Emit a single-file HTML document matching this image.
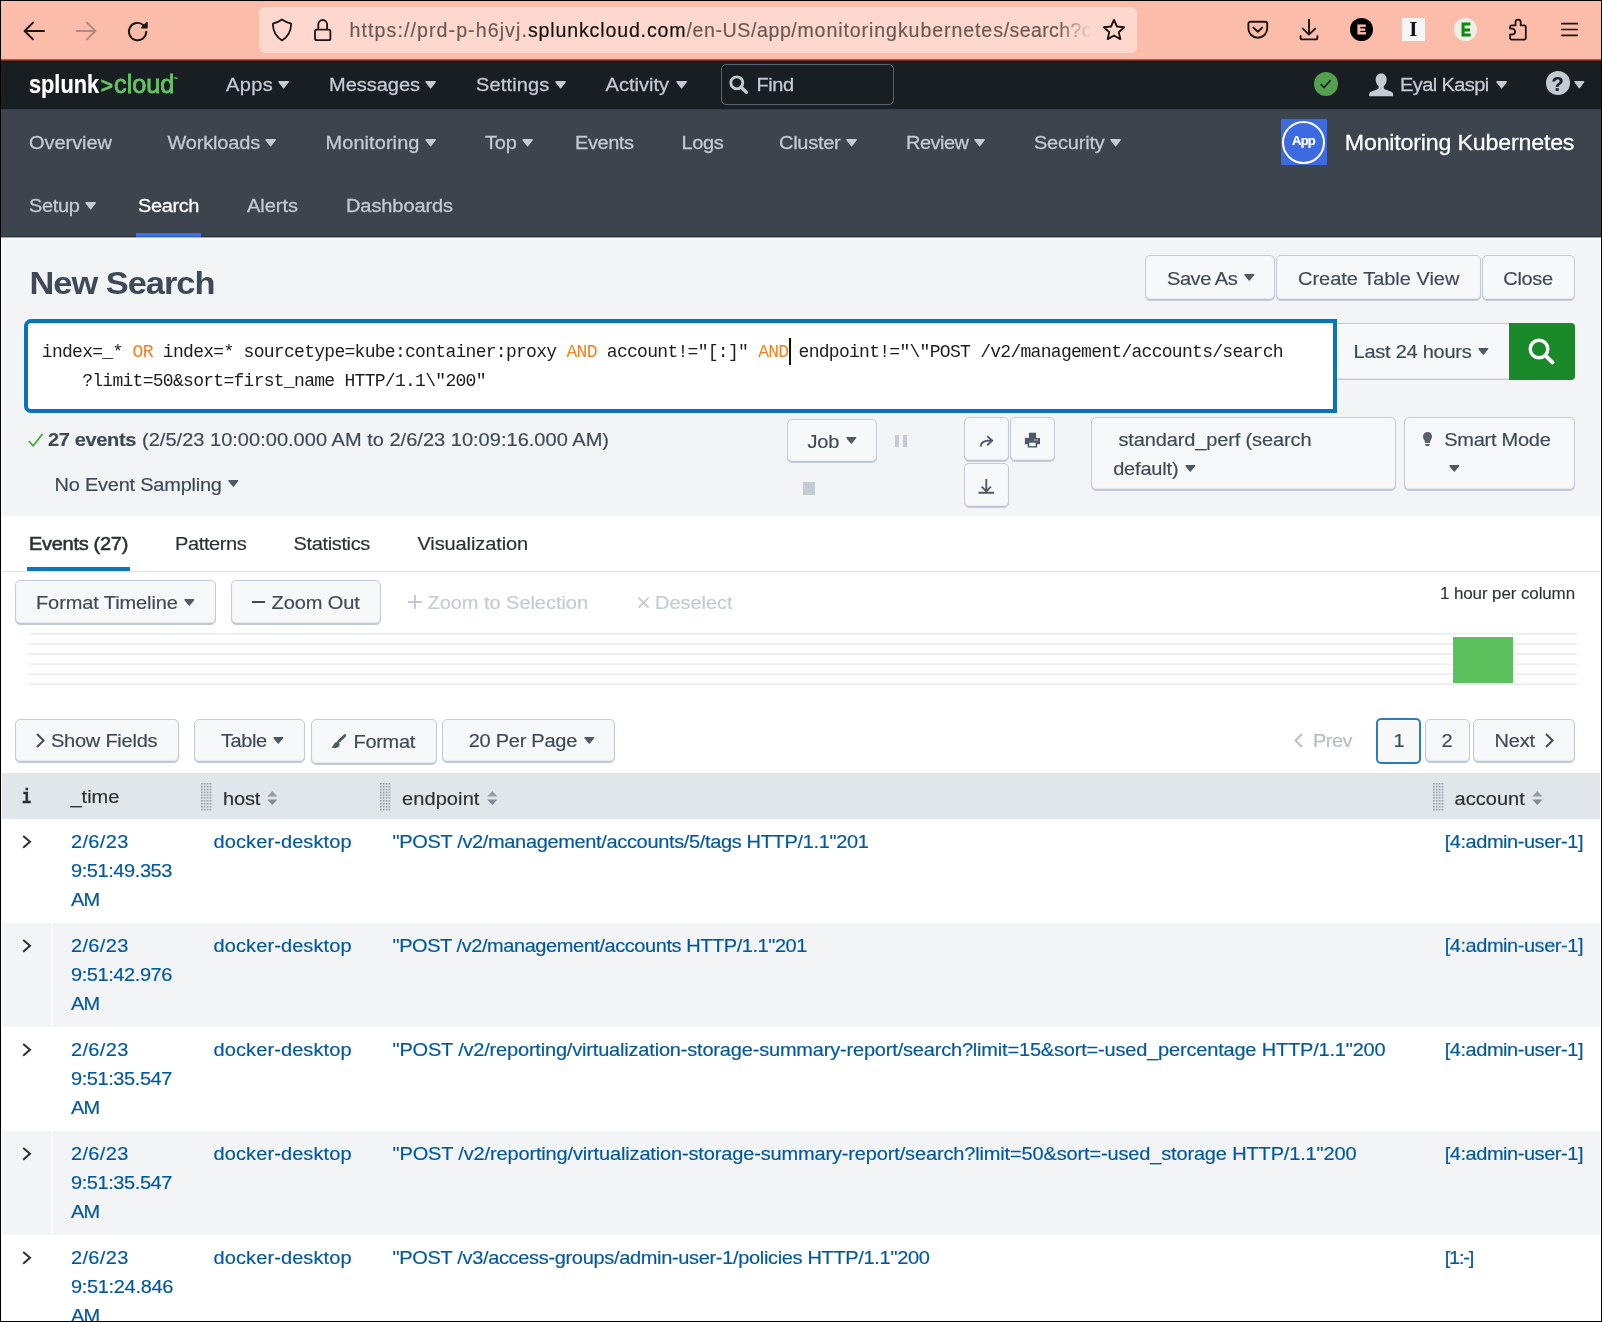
<!DOCTYPE html>
<html lang="en">
<head>
<meta charset="utf-8">
<title>Search | Splunk</title>
<style>
*{box-sizing:border-box;margin:0;padding:0}
html,body{width:1602px;height:1322px;overflow:hidden;background:#fff}
body{font-family:"Liberation Sans",sans-serif;font-size:20px;color:#3f4a59;position:relative}
.abs{position:absolute}
.t{position:absolute;white-space:pre;line-height:1;-webkit-text-stroke:0.2px currentColor}
.n{-webkit-text-stroke:0.28px currentColor}
svg{position:absolute;overflow:visible}
.btn{position:absolute;background:#f7f8fa;border:1px solid #c2cbd7;border-radius:5px;box-shadow:inset 0 -1px 0 #bcc5d1,inset 0 -2px 1px #e6e9ee}
#frame{position:absolute;left:0;top:0;width:1602px;height:1322px;border:1px solid #000;z-index:50}
</style>
</head>
<body>
<div id="page" style="position:absolute;left:0;top:0;width:1602px;height:1322px;will-change:transform">
<div id="chrome" class="abs" style="left:0;top:0;width:1602px;height:59px;background:#fcbcaa"></div>
<div class="abs" style="left:0.00px;top:59.00px;width:1602.00px;height:1.00px;background:#e8450a"></div>
<div class="abs" style="left:0.00px;top:60.00px;width:1602.00px;height:1.00px;background:#7a2e1e"></div>
<div class="abs" style="left:0.00px;top:61.00px;width:1602.00px;height:1.00px;background:#031b22"></div>
<div class="abs" style="left:258.60px;top:7.00px;width:878.40px;height:46.00px;background:#fed8ce;border-radius:6px"></div>
<svg style="left:20px;top:17px" width="28" height="28" viewBox="0 0 28 28" fill="none" stroke="#1c1413" stroke-width="2" stroke-linecap="round" stroke-linejoin="round"><path d="M24 14H5M13 5.6L4.6 14l8.4 8.4"/></svg>
<svg style="left:72px;top:17px" width="28" height="28" viewBox="0 0 28 28" fill="none" stroke="#b08a80" stroke-width="2" stroke-linecap="round" stroke-linejoin="round"><path d="M4.5 14H23.5M15 5.6l8.4 8.4-8.4 8.4"/></svg>
<svg style="left:124.200px;top:17.800px" width="28" height="28" viewBox="0 0 28 28" fill="none" stroke="#1c1413" stroke-width="1.900" stroke-linecap="round" stroke-linejoin="round"><path d="M22.3 13.6a8.7 8.7 0 1 1-2.8-6.4"/><path d="M23 4.4v5.4h-5.4z" fill="#1c1413" stroke-width="1.4"/></svg>
<svg style="left:270px;top:17px" width="24" height="26" viewBox="0 0 24 26" fill="none" stroke="#1c1413" stroke-width="1.800" stroke-linejoin="round"><path d="M12 2.500c2.200 1.700 5.200 3 8.600 3.900 0.300 0.100 0.500 0.400 0.500 0.700C21.100 14.200 18.300 19.600 12 23.400 5.700 19.600 2.900 14.200 2.900 7.100c0-0.300 0.200-0.600 0.500-0.700C6.800 5.500 9.800 4.200 12 2.500z"/></svg>
<svg style="left:312px;top:17px" width="22" height="26" viewBox="0 0 22 26" fill="none" stroke="#1c1413" stroke-width="1.800" stroke-linejoin="round"><rect x="3" y="12.600" width="15.400" height="10.600" rx="1.800"/><path d="M6.300 12.600V7.400a4.400 4.400 0 0 1 8.800 0v5.200"/></svg>
<div class="t" style="left:349.50px;top:21.00px;font-size:19.6px;color:#6e5a55;-webkit-text-stroke:0.2px currentColor;"><span style="letter-spacing:1.082px;">https://prd-p-h6jvj.</span><span style="letter-spacing:0.834px;color:#15110f;">splunkcloud.com</span><span style="letter-spacing:0.582px;">/en-US/app/</span><span style="letter-spacing:0.901px;">monitoringkubernetes</span><span style="letter-spacing:0.336px;">/search?c</span></div>
<div class="abs" style="left:1058.00px;top:12.00px;width:38.00px;height:36.00px;background:linear-gradient(90deg,rgba(254,216,206,0),#fed8ce 88%)"></div>
<svg style="left:1101px;top:17px" width="26" height="26" viewBox="0 0 26 26" fill="none" stroke="#1c1413" stroke-width="1.9" stroke-linejoin="round"><path d="M13 2.900l3 6.600 7.100 0.800-5.300 4.800 1.500 7-6.300-3.600-6.300 3.600 1.500-7L2.900 10.300l7.100-0.800z"/></svg>
<svg style="left:1245px;top:18px" width="26" height="24" viewBox="0 0 26 24" fill="none" stroke="#1c1413" stroke-width="1.9" stroke-linecap="round" stroke-linejoin="round"><path d="M5.400 3.800h14.800a2 2 0 0 1 2 2v4.600a9.400 9.400 0 0 1-18.800 0V5.800a2 2 0 0 1 2-2z"/><path d="M8.400 9.600l4.400 4.200 4.400-4.200"/></svg>
<svg style="left:1297px;top:17px" width="24" height="26" viewBox="0 0 24 26" fill="none" stroke="#1c1413" stroke-width="1.9" stroke-linecap="round" stroke-linejoin="round"><path d="M12 2.600v14.600M5.800 11.600l6.200 6 6.200-6M3.600 19v1.800a1.600 1.600 0 0 0 1.600 1.600h13.600a1.600 1.600 0 0 0 1.600-1.600V19"/></svg>
<div class="abs" style="left:1350.00px;top:18.00px;width:23.00px;height:23.00px;background:#000;border-radius:50%"></div>
<div class="t" style="left:1356.90px;top:23.00px;font-size:13.6px;color:#fcbcaa;font-weight:700;-webkit-text-stroke:0.8px #fcbcaa;">E</div>
<div class="abs" style="left:1402.00px;top:18.00px;width:23.00px;height:23.00px;background:#f6f6f6"></div>
<div class="t" style="left:1409.60px;top:19.00px;font-size:20px;color:#111;font-weight:700;font-family:'Liberation Serif',serif;">I</div>
<div class="abs" style="left:1454.00px;top:18.00px;width:23.00px;height:23.00px;background:#efefe8;border-radius:50%"></div>
<div class="t" style="left:1460.80px;top:22.00px;font-size:17.5px;color:#0a8a0a;font-weight:700;-webkit-text-stroke:1px #0a8a0a;transform:scaleX(0.84);transform-origin:0 0;">E</div>
<svg style="left:0;top:0" width="1" height="1" fill="none" stroke="#1c1413" stroke-width="1.800" stroke-linejoin="round"><path d="M1511.700 25.400H1515.500V22.200a2.600 2.600 0 0 1 5.200 0V25.400H1524.200a1.600 1.600 0 0 1 1.600 1.600V38.100a1.600 1.600 0 0 1-1.600 1.600H1511.700a1.600 1.600 0 0 1-1.600-1.600V34.500H1512.200a2.900 2.900 0 0 0 0-5.800H1510.100V27a1.600 1.600 0 0 1 1.600-1.600Z"/></svg>
<svg style="left:0;top:0" width="1" height="1" fill="none" stroke="#1c1413" stroke-width="1.700" stroke-linecap="round"><path d="M1561.800 23.700H1577.300M1561.800 29.500H1577.300M1561.800 35.300H1577.300"/></svg>
<div class="abs" style="left:0.00px;top:62.00px;width:1602.00px;height:47.00px;background:#191e22"></div>
<div class="t" style="left:28.60px;top:72.00px;font-size:25.5px;color:#fff;font-weight:700;transform:scaleX(0.8518);transform-origin:0 0;">splunk</div>
<div class="t" style="left:100.60px;top:76.00px;font-size:21.5px;letter-spacing:-0.956px;color:#65c466;font-weight:700;">&gt;</div>
<div class="t" style="left:113.60px;top:72.00px;font-size:25.5px;color:#65c466;-webkit-text-stroke:0.8px #65c466;transform:scaleX(0.9908);transform-origin:0 0;">cloud</div>
<div class="t" style="left:173.60px;top:77.00px;font-size:4px;color:#65c466;">™</div>
<div class="t n" style="left:226.00px;top:74.00px;font-size:20px;transform:scaleY(0.935);transform-origin:0 17px;letter-spacing:0.353px;color:#c3cbd4;">Apps</div>
<svg style="left:278.00px;top:80.60px" width="11.2" height="7.6" viewBox="0 0 11.2 7.6"><path d="M1 0.8 L10.2 0.8 L5.6 6.8 Z" fill="#c3cbd4" stroke="#c3cbd4" stroke-width="1.4" stroke-linejoin="round"/></svg>
<div class="t n" style="left:329.00px;top:74.00px;font-size:20px;transform:scaleY(0.935);transform-origin:0 17px;letter-spacing:-0.019px;color:#c3cbd4;">Messages</div>
<svg style="left:425.00px;top:80.60px" width="11.2" height="7.6" viewBox="0 0 11.2 7.6"><path d="M1 0.8 L10.2 0.8 L5.6 6.8 Z" fill="#c3cbd4" stroke="#c3cbd4" stroke-width="1.4" stroke-linejoin="round"/></svg>
<div class="t n" style="left:476.00px;top:74.00px;font-size:20px;transform:scaleY(0.935);transform-origin:0 17px;letter-spacing:0.154px;color:#c3cbd4;">Settings</div>
<svg style="left:554.50px;top:80.60px" width="11.2" height="7.6" viewBox="0 0 11.2 7.6"><path d="M1 0.8 L10.2 0.8 L5.6 6.8 Z" fill="#c3cbd4" stroke="#c3cbd4" stroke-width="1.4" stroke-linejoin="round"/></svg>
<div class="t n" style="left:605.60px;top:74.00px;font-size:20px;transform:scaleY(0.935);transform-origin:0 17px;letter-spacing:0.007px;color:#c3cbd4;">Activity</div>
<svg style="left:676.40px;top:80.60px" width="11.2" height="7.6" viewBox="0 0 11.2 7.6"><path d="M1 0.8 L10.2 0.8 L5.6 6.8 Z" fill="#c3cbd4" stroke="#c3cbd4" stroke-width="1.4" stroke-linejoin="round"/></svg>
<div class="abs" style="left:721.00px;top:64.40px;width:173.40px;height:40.60px;border:1px solid #5a6470;border-radius:5px"></div>
<svg style="left:728px;top:73.500px" width="22" height="22" viewBox="0 0 22 22" fill="none" stroke="#c3cbd4" stroke-width="2.8" stroke-linecap="round"><circle cx="8.800" cy="8.800" r="6"/><path d="M13.400 13.400l5 5" stroke-width="3.400"/></svg>
<div class="t n" style="left:756.40px;top:74.00px;font-size:20px;transform:scaleY(0.935);transform-origin:0 17px;letter-spacing:-0.427px;color:#c3cbd4;">Find</div>
<div class="abs" style="left:1313.90px;top:71.70px;width:24.40px;height:24.40px;background:#53a051;border-radius:50%"></div>
<svg style="left:1313.400px;top:71.200px" width="25.200" height="25.200" viewBox="0 0 25.200 25.200" fill="none" stroke="#171d21" stroke-width="1.700"><path d="M7.600 13.200l3.400 3.300 6.600-7.300"/></svg>
<svg style="left:1368.600px;top:72.800px" width="24.400" height="23.600" viewBox="0 0 24.400 23.600" fill="#c3cbd4"><path d="M12.200 0.400c3.300 0 5.500 2.500 5.500 6 0 2.600-1.200 5.300-2.900 6.700v1.600c0 0.700 0.400 1.200 1.100 1.500l5.900 2.300c1.500 0.600 2.400 1.800 2.400 3.400v1.300H0.200v-1.300c0-1.600 0.900-2.800 2.400-3.400l5.900-2.300c0.700-0.300 1.100-0.800 1.100-1.500v-1.600c-1.700-1.400-2.900-4.100-2.900-6.700 0-3.500 2.200-6 5.500-6z"/></svg>
<div class="t n" style="left:1400.00px;top:74.00px;font-size:20px;transform:scaleY(0.935);transform-origin:0 17px;letter-spacing:-0.589px;color:#c3cbd4;">Eyal Kaspi</div>
<svg style="left:1496.40px;top:80.70px" width="11.2" height="7.6" viewBox="0 0 11.2 7.6"><path d="M1 0.8 L10.2 0.8 L5.6 6.8 Z" fill="#c3cbd4" stroke="#c3cbd4" stroke-width="1.4" stroke-linejoin="round"/></svg>
<div class="abs" style="left:1546.00px;top:71.40px;width:24.00px;height:24.00px;background:#c3cbd4;border-radius:50%"></div>
<div class="t" style="left:1551.60px;top:74.00px;font-size:20px;color:#191e22;font-weight:700;">?</div>
<svg style="left:1574.00px;top:80.80px" width="10.6" height="7.4" viewBox="0 0 10.6 7.4"><path d="M1 0.8 L9.6 0.8 L5.3 6.6000000000000005 Z" fill="#c3cbd4" stroke="#c3cbd4" stroke-width="1.4" stroke-linejoin="round"/></svg>
<div class="abs" style="left:0.00px;top:109.00px;width:1602.00px;height:127.00px;background:#3c444d"></div>
<div class="abs" style="left:0.00px;top:109.00px;width:1602.00px;height:1.00px;background:#333a44"></div>
<div class="abs" style="left:0.00px;top:236.00px;width:1602.00px;height:1.00px;background:#2a323d"></div>
<div class="abs" style="left:0.00px;top:237.00px;width:1602.00px;height:1.00px;background:#a3a6a9"></div>
<div class="t n" style="left:29.00px;top:132.00px;font-size:20px;transform:scaleY(0.935);transform-origin:0 17px;letter-spacing:-0.044px;color:#c3cbd4;">Overview</div>
<div class="t n" style="left:167.50px;top:132.00px;font-size:20px;transform:scaleY(0.935);transform-origin:0 17px;letter-spacing:-0.179px;color:#c3cbd4;">Workloads</div>
<svg style="left:265.00px;top:138.60px" width="11.2" height="7.6" viewBox="0 0 11.2 7.6"><path d="M1 0.8 L10.2 0.8 L5.6 6.8 Z" fill="#c3cbd4" stroke="#c3cbd4" stroke-width="1.4" stroke-linejoin="round"/></svg>
<div class="t n" style="left:325.50px;top:132.00px;font-size:20px;transform:scaleY(0.935);transform-origin:0 17px;letter-spacing:0.062px;color:#c3cbd4;">Monitoring</div>
<svg style="left:424.50px;top:138.60px" width="11.2" height="7.6" viewBox="0 0 11.2 7.6"><path d="M1 0.8 L10.2 0.8 L5.6 6.8 Z" fill="#c3cbd4" stroke="#c3cbd4" stroke-width="1.4" stroke-linejoin="round"/></svg>
<div class="t n" style="left:485.00px;top:132.00px;font-size:20px;transform:scaleY(0.935);transform-origin:0 17px;letter-spacing:-0.249px;color:#c3cbd4;">Top</div>
<svg style="left:521.50px;top:138.60px" width="11.2" height="7.6" viewBox="0 0 11.2 7.6"><path d="M1 0.8 L10.2 0.8 L5.6 6.8 Z" fill="#c3cbd4" stroke="#c3cbd4" stroke-width="1.4" stroke-linejoin="round"/></svg>
<div class="t n" style="left:575.00px;top:132.00px;font-size:20px;transform:scaleY(0.935);transform-origin:0 17px;letter-spacing:-0.440px;color:#c3cbd4;">Events</div>
<div class="t n" style="left:681.50px;top:132.00px;font-size:20px;transform:scaleY(0.935);transform-origin:0 17px;letter-spacing:-0.342px;color:#c3cbd4;">Logs</div>
<div class="t n" style="left:779.00px;top:132.00px;font-size:20px;transform:scaleY(0.935);transform-origin:0 17px;letter-spacing:-0.264px;color:#c3cbd4;">Cluster</div>
<svg style="left:845.50px;top:138.60px" width="11.2" height="7.6" viewBox="0 0 11.2 7.6"><path d="M1 0.8 L10.2 0.8 L5.6 6.8 Z" fill="#c3cbd4" stroke="#c3cbd4" stroke-width="1.4" stroke-linejoin="round"/></svg>
<div class="t n" style="left:906.00px;top:132.00px;font-size:20px;transform:scaleY(0.935);transform-origin:0 17px;letter-spacing:-0.513px;color:#c3cbd4;">Review</div>
<svg style="left:973.50px;top:138.60px" width="11.2" height="7.6" viewBox="0 0 11.2 7.6"><path d="M1 0.8 L10.2 0.8 L5.6 6.8 Z" fill="#c3cbd4" stroke="#c3cbd4" stroke-width="1.4" stroke-linejoin="round"/></svg>
<div class="t n" style="left:1034.00px;top:132.00px;font-size:20px;transform:scaleY(0.935);transform-origin:0 17px;letter-spacing:-0.218px;color:#c3cbd4;">Security</div>
<svg style="left:1109.50px;top:138.60px" width="11.2" height="7.6" viewBox="0 0 11.2 7.6"><path d="M1 0.8 L10.2 0.8 L5.6 6.8 Z" fill="#c3cbd4" stroke="#c3cbd4" stroke-width="1.4" stroke-linejoin="round"/></svg>
<div class="t n" style="left:29.00px;top:195.00px;font-size:20px;transform:scaleY(0.935);transform-origin:0 17px;letter-spacing:-0.353px;color:#c3cbd4;">Setup</div>
<svg style="left:84.50px;top:201.60px" width="11.2" height="7.6" viewBox="0 0 11.2 7.6"><path d="M1 0.8 L10.2 0.8 L5.6 6.8 Z" fill="#c3cbd4" stroke="#c3cbd4" stroke-width="1.4" stroke-linejoin="round"/></svg>
<div class="t n" style="left:138.00px;top:195.00px;font-size:20px;transform:scaleY(0.935);transform-origin:0 17px;letter-spacing:-0.395px;color:#fff;">Search</div>
<div class="t n" style="left:247.00px;top:195.00px;font-size:20px;transform:scaleY(0.935);transform-origin:0 17px;letter-spacing:-0.021px;color:#c3cbd4;">Alerts</div>
<div class="t n" style="left:346.00px;top:195.00px;font-size:20px;transform:scaleY(0.935);transform-origin:0 17px;letter-spacing:-0.084px;color:#c3cbd4;">Dashboards</div>
<div class="abs" style="left:136.00px;top:233.00px;width:65.00px;height:3.00px;background:#3f70de"></div>
<div class="abs" style="left:136.00px;top:236.00px;width:65.00px;height:1.00px;background:#2b62dc"></div>
<div class="abs" style="left:136.00px;top:237.00px;width:65.00px;height:1.00px;background:#a4b6ee"></div>
<div class="abs" style="left:1280.70px;top:119.00px;width:46.30px;height:46.30px;background:#3c6be0"></div>
<div class="abs" style="left:1282.30px;top:120.60px;width:43.10px;height:43.10px;border:2.2px solid #fff;border-radius:50%"></div>
<div class="t" style="left:1292.00px;top:134.00px;font-size:13px;transform:scaleY(0.935);transform-origin:0 11px;letter-spacing:-0.757px;color:#fff;font-weight:700;">App</div>
<div class="t n" style="left:1344.80px;top:131.00px;font-size:23.2px;transform:scaleY(0.935);transform-origin:0 19px;letter-spacing:-0.182px;color:#fff;">Monitoring Kubernetes</div>
<div class="abs" style="left:2.00px;top:239.00px;width:1598.00px;height:277.00px;background:#f2f4f5"></div>
<div class="t" style="left:29.50px;top:265.00px;font-size:34.4px;transform:scaleY(0.935);transform-origin:0 29px;letter-spacing:-1.003px;color:#3f4a59;font-weight:700;-webkit-text-stroke:0;">New Search</div>
<div class="btn" style="left:1145.30px;top:255.00px;width:130.10px;height:45.60px;"></div>
<div class="t" style="left:1167.00px;top:268.00px;font-size:20px;transform:scaleY(0.935);transform-origin:0 17px;letter-spacing:-0.440px;">Save As</div>
<svg style="left:1244.00px;top:274.30px" width="10.6" height="6.8" viewBox="0 0 10.6 6.8"><path d="M1 0.8 L9.6 0.8 L5.3 6.0 Z" fill="#505a66" stroke="#505a66" stroke-width="1.4" stroke-linejoin="round"/></svg>
<div class="btn" style="left:1276.00px;top:255.00px;width:204.60px;height:45.60px;"></div>
<div class="t" style="left:1298.00px;top:268.00px;font-size:20px;transform:scaleY(0.935);transform-origin:0 17px;letter-spacing:-0.011px;">Create Table View</div>
<div class="btn" style="left:1481.60px;top:255.00px;width:93.40px;height:45.60px;"></div>
<div class="t" style="left:1503.30px;top:268.00px;font-size:20px;transform:scaleY(0.935);transform-origin:0 17px;letter-spacing:-0.347px;">Close</div>
<div class="abs" style="left:1330.00px;top:323.00px;width:179.00px;height:56.60px;background:#f7f8fa;border-top:1px solid #c3cbd4;border-bottom:1px solid #c3cbd4;box-shadow:inset 0 -1px 0 #dfe4e8"></div>
<div class="t" style="left:1353.50px;top:341.00px;font-size:20px;transform:scaleY(0.935);transform-origin:0 17px;letter-spacing:-0.246px;">Last 24 hours</div>
<svg style="left:1478.00px;top:347.80px" width="10.6" height="6.8" viewBox="0 0 10.6 6.8"><path d="M1 0.8 L9.6 0.8 L5.3 6.0 Z" fill="#505a66" stroke="#505a66" stroke-width="1.4" stroke-linejoin="round"/></svg>
<div class="abs" style="left:1508.70px;top:322.70px;width:66.30px;height:57.30px;background:#1a8929;border-radius:0 4px 4px 0"></div>
<svg style="left:1524px;top:334px" width="34" height="34" viewBox="0 0 34 34" fill="none" stroke="#fff" stroke-width="3.400" stroke-linecap="round"><circle cx="15" cy="15" r="8.800"/><path d="M21.800 21.800l6.600 6.600" stroke-width="4"/></svg>
<div class="abs" style="left:24.40px;top:318.80px;width:1312.40px;height:94.40px;background:#fff;border:4px solid #0b72b4;border-radius:7px 0 0 7px;box-shadow:inset 0 1px 2px rgba(0,0,0,.15)"></div>
<div class="t" style="left:41.80px;top:343.00px;font-size:18px;letter-spacing:-0.712px;color:#1a1c20;font-family:'Liberation Mono',monospace;-webkit-text-stroke:0;">index=_* </div>
<div class="t" style="left:132.61px;top:343.00px;font-size:18px;letter-spacing:-0.712px;color:#f0811e;font-family:'Liberation Mono',monospace;-webkit-text-stroke:0;">OR</div>
<div class="t" style="left:152.79px;top:343.00px;font-size:18px;letter-spacing:-0.712px;color:#1a1c20;font-family:'Liberation Mono',monospace;-webkit-text-stroke:0;"> index=* sourcetype=kube:container:proxy </div>
<div class="t" style="left:566.48px;top:343.00px;font-size:18px;letter-spacing:-0.712px;color:#f0811e;font-family:'Liberation Mono',monospace;-webkit-text-stroke:0;">AND</div>
<div class="t" style="left:596.75px;top:343.00px;font-size:18px;letter-spacing:-0.712px;color:#1a1c20;font-family:'Liberation Mono',monospace;-webkit-text-stroke:0;"> account!="[:]" </div>
<div class="t" style="left:758.19px;top:343.00px;font-size:18px;letter-spacing:-0.712px;color:#f0811e;font-family:'Liberation Mono',monospace;-webkit-text-stroke:0;">AND</div>
<div class="t" style="left:788.46px;top:343.00px;font-size:18px;letter-spacing:-0.712px;color:#1a1c20;font-family:'Liberation Mono',monospace;-webkit-text-stroke:0;"> endpoint!="\"POST /v2/management/accounts/search</div>
<div class="t" style="left:82.16px;top:372.00px;font-size:18px;letter-spacing:-0.712px;color:#1a1c20;font-family:'Liberation Mono',monospace;-webkit-text-stroke:0;">?limit=50&amp;sort=first_name HTTP/1.1\"200"</div>
<div class="abs" style="left:789.00px;top:337.50px;width:2.40px;height:27.00px;background:#111"></div>
<svg style="left:28px;top:433px" width="16" height="14" viewBox="0 0 16 14" fill="none" stroke="#4fa84a" stroke-width="1.800"><path d="M0.800 8.200l4.400 4.600L14.600 0.900"/></svg>
<div class="t" style="left:48.00px;top:429.00px;font-size:20px;transform:scaleY(0.935);transform-origin:0 17px;letter-spacing:-0.352px;font-weight:700;">27 events</div>
<div class="t" style="left:142.00px;top:429.00px;font-size:20px;transform:scaleY(0.935);transform-origin:0 17px;letter-spacing:0.022px;">(2/5/23 10:00:00.000 AM to 2/6/23 10:09:16.000 AM)</div>
<div class="t" style="left:54.50px;top:474.00px;font-size:20px;transform:scaleY(0.935);transform-origin:0 17px;letter-spacing:-0.235px;">No Event Sampling</div>
<svg style="left:228.20px;top:480.20px" width="10.6" height="6.8" viewBox="0 0 10.6 6.8"><path d="M1 0.8 L9.6 0.8 L5.3 6.0 Z" fill="#505a66" stroke="#505a66" stroke-width="1.4" stroke-linejoin="round"/></svg>
<div class="btn" style="left:786.50px;top:418.70px;width:90.50px;height:44.70px;"></div>
<div class="t" style="left:807.50px;top:431.00px;font-size:20px;transform:scaleY(0.935);transform-origin:0 17px;letter-spacing:-0.249px;">Job</div>
<svg style="left:846.00px;top:437.30px" width="10.6" height="6.8" viewBox="0 0 10.6 6.8"><path d="M1 0.8 L9.6 0.8 L5.3 6.0 Z" fill="#505a66" stroke="#505a66" stroke-width="1.4" stroke-linejoin="round"/></svg>
<div class="abs" style="left:895.00px;top:434.50px;width:4.00px;height:12.00px;background:#c3cbd4"></div>
<div class="abs" style="left:902.50px;top:434.50px;width:4.00px;height:12.00px;background:#c3cbd4"></div>
<div class="abs" style="left:802.50px;top:482.00px;width:12.70px;height:12.50px;background:#c3cbd4"></div>
<div class="btn" style="left:964.00px;top:417.00px;width:45.00px;height:45.00px;"></div>
<div class="btn" style="left:1010.00px;top:417.00px;width:45.40px;height:45.00px;"></div>
<div class="btn" style="left:964.00px;top:463.00px;width:45.00px;height:45.00px;"></div>
<svg style="left:0;top:0" width="1" height="1" fill="none" stroke="#4f5a67" stroke-width="1.900" stroke-linejoin="miter"><path d="M980.500 446.600c0.300-4 3.600-6.300 10.600-6.100M987.200 436.100l5 4.500-5 4.700"/></svg>
<svg style="left:0;top:0" width="1" height="1" fill="#4f5a67"><path d="M1028.900 432.800h7.200v5.600h-7.200zM1024.900 437.900h15.100v6.300h-15.100zM1027.700 441.600h9.500v5.900h-9.500z"/><rect x="1029.300" y="442.700" width="6.300" height="3.400" fill="#f7f8fa"/><rect x="1034.200" y="439.300" width="1.400" height="1.300" fill="#c7cdd5"/><rect x="1036.500" y="439.300" width="1.400" height="1.300" fill="#c7cdd5"/></svg>
<svg style="left:0;top:0" width="1" height="1" fill="none" stroke="#4f5a67" stroke-width="1.900"><path d="M986.300 478.900v12.400M981.700 486.600l4.600 4.700 4.600-4.700M978.500 492.800h15.600"/></svg>
<div class="btn" style="left:1091.40px;top:417.40px;width:304.20px;height:73.20px;"></div>
<div class="t" style="left:1118.40px;top:429.00px;font-size:20px;transform:scaleY(0.935);transform-origin:0 17px;letter-spacing:-0.127px;">standard_perf (search</div>
<div class="t" style="left:1113.20px;top:458.00px;font-size:20px;transform:scaleY(0.935);transform-origin:0 17px;letter-spacing:-0.189px;">default)</div>
<svg style="left:1185.00px;top:464.80px" width="10.6" height="6.8" viewBox="0 0 10.6 6.8"><path d="M1 0.8 L9.6 0.8 L5.3 6.0 Z" fill="#505a66" stroke="#505a66" stroke-width="1.4" stroke-linejoin="round"/></svg>
<div class="btn" style="left:1404.00px;top:417.40px;width:171.00px;height:73.20px;"></div>
<svg style="left:1422.700px;top:432px" width="9" height="14" viewBox="0 0 9 14" fill="#56606c"><path d="M4.500 0a4.500 4.500 0 0 1 4.500 4.500c0 1.700-0.900 2.800-1.500 4.100-0.300 0.700-0.500 1.500-0.600 2.400H2.100c-0.100-0.900-0.300-1.700-0.600-2.400C0.900 7.300 0 6.200 0 4.500A4.500 4.500 0 0 1 4.500 0zM2.300 12h4.400v1.100c0 0.500-0.400 0.900-0.900 0.900H3.200c-0.500 0-0.900-0.400-0.900-0.900z"/></svg>
<div class="t" style="left:1444.30px;top:429.00px;font-size:20px;transform:scaleY(0.935);transform-origin:0 17px;letter-spacing:-0.273px;">Smart Mode</div>
<svg style="left:1449.20px;top:464.60px" width="10.6" height="6.8" viewBox="0 0 10.6 6.8"><path d="M1 0.8 L9.6 0.8 L5.3 6.0 Z" fill="#505a66" stroke="#505a66" stroke-width="1.4" stroke-linejoin="round"/></svg>
<div class="t" style="left:29.00px;top:533.00px;font-size:20px;transform:scaleY(0.935);transform-origin:0 17px;letter-spacing:-0.297px;color:#2c3036;-webkit-text-stroke:0.6px #2c3036;">Events (27)</div>
<div class="t" style="left:175.00px;top:533.00px;font-size:20px;transform:scaleY(0.935);transform-origin:0 17px;letter-spacing:-0.373px;color:#2c3036;">Patterns</div>
<div class="t" style="left:293.50px;top:533.00px;font-size:20px;transform:scaleY(0.935);transform-origin:0 17px;letter-spacing:-0.352px;color:#2c3036;">Statistics</div>
<div class="t" style="left:417.50px;top:533.00px;font-size:20px;transform:scaleY(0.935);transform-origin:0 17px;letter-spacing:-0.110px;color:#2c3036;">Visualization</div>
<div class="abs" style="left:2.00px;top:571.30px;width:1598.00px;height:1.20px;background:#dfe4e8"></div>
<div class="abs" style="left:27.00px;top:567.00px;width:102.50px;height:4.20px;background:#0b76bd"></div>
<div class="btn" style="left:14.50px;top:580.00px;width:201.30px;height:44.80px;"></div>
<div class="t" style="left:36.00px;top:592.00px;font-size:20px;transform:scaleY(0.935);transform-origin:0 17px;letter-spacing:-0.105px;">Format Timeline</div>
<svg style="left:184.30px;top:598.50px" width="10.6" height="6.8" viewBox="0 0 10.6 6.8"><path d="M1 0.8 L9.6 0.8 L5.3 6.0 Z" fill="#505a66" stroke="#505a66" stroke-width="1.4" stroke-linejoin="round"/></svg>
<div class="btn" style="left:230.70px;top:580.00px;width:150.10px;height:44.80px;"></div>
<div class="abs" style="left:251.80px;top:601.20px;width:13.60px;height:1.80px;background:#3f4a59"></div>
<div class="t" style="left:271.60px;top:592.00px;font-size:20px;transform:scaleY(0.935);transform-origin:0 17px;letter-spacing:-0.115px;">Zoom Out</div>
<div class="abs" style="left:408.00px;top:601.20px;width:14.00px;height:1.70px;background:#c3cbd4"></div>
<div class="abs" style="left:414.10px;top:595.00px;width:1.70px;height:14.00px;background:#c3cbd4"></div>
<div class="t" style="left:427.50px;top:592.00px;font-size:20px;transform:scaleY(0.935);transform-origin:0 17px;letter-spacing:-0.041px;color:#c3cbd4;">Zoom to Selection</div>
<svg style="left:637.500px;top:596.600px" width="11.200" height="11.200" viewBox="0 0 11.200 11.200" stroke="#c3cbd4" stroke-width="1.800"><path d="M0.600 0.600l10 10M10.600 0.600l-10 10"/></svg>
<div class="t" style="left:655.00px;top:592.00px;font-size:20px;transform:scaleY(0.935);transform-origin:0 17px;letter-spacing:-0.039px;color:#c3cbd4;">Deselect</div>
<div class="t" style="left:1440.00px;top:585.00px;font-size:17px;transform:scaleY(0.935);transform-origin:0 14px;letter-spacing:-0.119px;color:#2c3036;-webkit-text-stroke:0.1px #2c3036;">1 hour per column</div>
<svg style="left:0;top:0" width="1" height="1" fill="none" stroke="#e6e9ec" stroke-width="1.400"><path d="M28.500 633.85H1577M28.500 643.93H1577M28.500 654.01H1577M28.500 664.09H1577M28.500 674.17H1577M28.500 684.25H1577"/></svg>
<div class="abs" style="left:1452.70px;top:637.00px;width:60.80px;height:46.30px;background:#5cc05c"></div>
<div class="btn" style="left:14.50px;top:718.70px;width:164.10px;height:44.50px;"></div>
<svg style="left:35.500px;top:733px" width="9" height="15" viewBox="0 0 9 15" fill="none" stroke="#3f4a59" stroke-width="1.900"><path d="M1 1l6.600 6.500L1 14"/></svg>
<div class="t" style="left:51.00px;top:730.00px;font-size:20px;transform:scaleY(0.935);transform-origin:0 17px;letter-spacing:-0.240px;">Show Fields</div>
<div class="btn" style="left:194.20px;top:718.70px;width:110.60px;height:44.50px;"></div>
<div class="t" style="left:221.00px;top:730.00px;font-size:20px;transform:scaleY(0.935);transform-origin:0 17px;letter-spacing:-0.423px;">Table</div>
<svg style="left:273.40px;top:736.80px" width="10.6" height="6.8" viewBox="0 0 10.6 6.8"><path d="M1 0.8 L9.6 0.8 L5.3 6.0 Z" fill="#505a66" stroke="#505a66" stroke-width="1.4" stroke-linejoin="round"/></svg>
<div class="btn" style="left:311.00px;top:719.00px;width:125.60px;height:45.50px;"></div>
<svg style="left:0;top:0" width="1" height="1"><path d="M338.600 741.600L344.900 735.600" stroke="#505a66" stroke-width="2.800" stroke-linecap="round" fill="none"/><path d="M331.600 747.700C333 746.600 333.300 744.300 334.700 742.900 335.900 741.700 337.800 741.700 338.900 742.800 340 743.900 339.900 745.800 338.500 746.900 336.600 748.300 333.700 748 331.600 747.700Z" fill="#505a66"/></svg>
<div class="t" style="left:353.50px;top:731.00px;font-size:20px;transform:scaleY(0.935);transform-origin:0 17px;letter-spacing:-0.307px;">Format</div>
<div class="btn" style="left:442.00px;top:718.70px;width:173.00px;height:44.50px;"></div>
<div class="t" style="left:468.70px;top:730.00px;font-size:20px;transform:scaleY(0.935);transform-origin:0 17px;letter-spacing:-0.263px;">20 Per Page</div>
<svg style="left:583.70px;top:736.80px" width="10.6" height="6.8" viewBox="0 0 10.6 6.8"><path d="M1 0.8 L9.6 0.8 L5.3 6.0 Z" fill="#505a66" stroke="#505a66" stroke-width="1.4" stroke-linejoin="round"/></svg>
<svg style="left:1293.500px;top:733px" width="9" height="15" viewBox="0 0 9 15" fill="none" stroke="#b4bcc6" stroke-width="1.800"><path d="M8 1L1.400 7.500 8 14"/></svg>
<div class="t" style="left:1313.00px;top:730.00px;font-size:20px;transform:scaleY(0.935);transform-origin:0 17px;letter-spacing:-0.531px;color:#b4bcc6;">Prev</div>
<div class="btn" style="left:1375.70px;top:718.00px;width:45.30px;height:45.80px;border:2px solid #2a7cc0;border-radius:5px;box-shadow:none"></div>
<div class="t" style="left:1393.60px;top:730.00px;font-size:20px;transform:scaleY(0.935);transform-origin:0 17px;letter-spacing:-2.123px;">1</div>
<div class="btn" style="left:1424.50px;top:718.70px;width:45.50px;height:44.50px;"></div>
<div class="t" style="left:1441.40px;top:730.00px;font-size:20px;transform:scaleY(0.935);transform-origin:0 17px;letter-spacing:0.377px;">2</div>
<div class="btn" style="left:1472.50px;top:718.70px;width:102.50px;height:44.50px;"></div>
<div class="t" style="left:1494.50px;top:730.00px;font-size:20px;transform:scaleY(0.935);transform-origin:0 17px;letter-spacing:-0.156px;">Next</div>
<svg style="left:1545.400px;top:733px" width="9" height="15" viewBox="0 0 9 15" fill="none" stroke="#3f4a59" stroke-width="1.900"><path d="M1 1l6.600 6.500L1 14"/></svg>
<div class="abs" style="left:2.00px;top:773.00px;width:1598.00px;height:45.60px;background:#e1e6eb"></div>
<div class="t" style="left:22.20px;top:789.00px;font-size:19.5px;color:#2c3036;font-weight:700;font-family:'Liberation Mono',monospace;transform:scaleX(0.78);transform-origin:0 0;-webkit-text-stroke:0.5px #2c3036;">i</div>
<div class="t" style="left:70.50px;top:786.00px;font-size:20px;transform:scaleY(0.935);transform-origin:0 17px;letter-spacing:-0.021px;color:#2c3036;">_time</div>
<div class="abs" style="left:201.10px;top:783.00px;width:11.40px;height:27.90px;background-image:radial-gradient(circle at 0.8px 0.8px,#8c96a2 0.55px,rgba(140,150,162,0) 1.05px);background-size:2.86px 2.86px"></div>
<div class="t" style="left:223.00px;top:788.00px;font-size:20px;transform:scaleY(0.935);transform-origin:0 17px;letter-spacing:-0.151px;color:#2c3036;">host</div>
<svg style="left:267px;top:791.2px" width="10.600" height="14.400" viewBox="0 0 10.600 14.400"><path d="M5.300 0.100l5.100 5.300H0.200z" fill="#939ea9"/><path d="M5.300 14l5.100-5.500H0.200z" fill="#818c99"/></svg>
<div class="abs" style="left:379.60px;top:783.00px;width:11.40px;height:27.90px;background-image:radial-gradient(circle at 0.8px 0.8px,#8c96a2 0.55px,rgba(140,150,162,0) 1.05px);background-size:2.86px 2.86px"></div>
<div class="t" style="left:402.00px;top:788.00px;font-size:20px;transform:scaleY(0.935);transform-origin:0 17px;letter-spacing:0.095px;color:#2c3036;">endpoint</div>
<svg style="left:487.2px;top:791.2px" width="10.600" height="14.400" viewBox="0 0 10.600 14.400"><path d="M5.300 0.100l5.100 5.300H0.200z" fill="#939ea9"/><path d="M5.300 14l5.100-5.500H0.200z" fill="#818c99"/></svg>
<div class="abs" style="left:1432.80px;top:783.00px;width:11.40px;height:27.90px;background-image:radial-gradient(circle at 0.8px 0.8px,#8c96a2 0.55px,rgba(140,150,162,0) 1.05px);background-size:2.86px 2.86px"></div>
<div class="t" style="left:1454.60px;top:788.00px;font-size:20px;transform:scaleY(0.935);transform-origin:0 17px;letter-spacing:0.022px;color:#2c3036;">account</div>
<svg style="left:1532px;top:791.2px" width="10.600" height="14.400" viewBox="0 0 10.600 14.400"><path d="M5.300 0.100l5.100 5.300H0.200z" fill="#939ea9"/><path d="M5.300 14l5.100-5.500H0.200z" fill="#818c99"/></svg>
<svg style="left:21.600px;top:835.00px" width="9.600" height="13.600" viewBox="0 0 9.600 13.600" fill="none" stroke="#2c3036" stroke-width="2"><path d="M1.200 0.900l6.800 5.900-6.800 5.900"/></svg>
<div class="t" style="left:71.00px;top:831.00px;font-size:20px;transform:scaleY(0.935);transform-origin:0 17px;letter-spacing:0.332px;color:#00599b;">2/6/23</div>
<div class="t" style="left:71.00px;top:860.00px;font-size:20px;transform:scaleY(0.935);transform-origin:0 17px;letter-spacing:-0.423px;color:#00599b;">9:51:49.353</div>
<div class="t" style="left:71.00px;top:889.00px;font-size:20px;transform:scaleY(0.935);transform-origin:0 17px;letter-spacing:-0.750px;color:#00599b;">AM</div>
<div class="t" style="left:213.50px;top:831.00px;font-size:20px;transform:scaleY(0.935);transform-origin:0 17px;letter-spacing:0.104px;color:#00599b;">docker-desktop</div>
<div class="t" style="left:392.50px;top:831.00px;font-size:20px;transform:scaleY(0.935);transform-origin:0 17px;letter-spacing:-0.346px;color:#00599b;">"POST /v2/management/accounts/5/tags HTTP/1.1"201</div>
<div class="t" style="left:1444.70px;top:831.00px;font-size:20px;transform:scaleY(0.935);transform-origin:0 17px;letter-spacing:-0.457px;color:#00599b;">[4:admin-user-1]</div>
<div class="abs" style="left:2.00px;top:922.60px;width:1598.00px;height:104.00px;background:#f2f4f5"></div>
<div class="abs" style="left:51.40px;top:922.60px;width:1.60px;height:104.00px;background:#f9fafb"></div>
<svg style="left:21.600px;top:939.00px" width="9.600" height="13.600" viewBox="0 0 9.600 13.600" fill="none" stroke="#2c3036" stroke-width="2"><path d="M1.200 0.900l6.800 5.900-6.800 5.900"/></svg>
<div class="t" style="left:71.00px;top:935.00px;font-size:20px;transform:scaleY(0.935);transform-origin:0 17px;letter-spacing:0.332px;color:#00599b;">2/6/23</div>
<div class="t" style="left:71.00px;top:964.00px;font-size:20px;transform:scaleY(0.935);transform-origin:0 17px;letter-spacing:-0.423px;color:#00599b;">9:51:42.976</div>
<div class="t" style="left:71.00px;top:993.00px;font-size:20px;transform:scaleY(0.935);transform-origin:0 17px;letter-spacing:-0.750px;color:#00599b;">AM</div>
<div class="t" style="left:213.50px;top:935.00px;font-size:20px;transform:scaleY(0.935);transform-origin:0 17px;letter-spacing:0.104px;color:#00599b;">docker-desktop</div>
<div class="t" style="left:392.50px;top:935.00px;font-size:20px;transform:scaleY(0.935);transform-origin:0 17px;letter-spacing:-0.439px;color:#00599b;">"POST /v2/management/accounts HTTP/1.1"201</div>
<div class="t" style="left:1444.70px;top:935.00px;font-size:20px;transform:scaleY(0.935);transform-origin:0 17px;letter-spacing:-0.457px;color:#00599b;">[4:admin-user-1]</div>
<svg style="left:21.600px;top:1043.00px" width="9.600" height="13.600" viewBox="0 0 9.600 13.600" fill="none" stroke="#2c3036" stroke-width="2"><path d="M1.200 0.900l6.800 5.900-6.800 5.900"/></svg>
<div class="t" style="left:71.00px;top:1039.00px;font-size:20px;transform:scaleY(0.935);transform-origin:0 17px;letter-spacing:0.332px;color:#00599b;">2/6/23</div>
<div class="t" style="left:71.00px;top:1068.00px;font-size:20px;transform:scaleY(0.935);transform-origin:0 17px;letter-spacing:-0.423px;color:#00599b;">9:51:35.547</div>
<div class="t" style="left:71.00px;top:1097.00px;font-size:20px;transform:scaleY(0.935);transform-origin:0 17px;letter-spacing:-0.750px;color:#00599b;">AM</div>
<div class="t" style="left:213.50px;top:1039.00px;font-size:20px;transform:scaleY(0.935);transform-origin:0 17px;letter-spacing:0.104px;color:#00599b;">docker-desktop</div>
<div class="t" style="left:392.50px;top:1039.00px;font-size:20px;transform:scaleY(0.935);transform-origin:0 17px;letter-spacing:-0.187px;color:#00599b;">"POST /v2/reporting/virtualization-storage-summary-report/search?limit=15&amp;sort=-used_percentage HTTP/1.1"200</div>
<div class="t" style="left:1444.70px;top:1039.00px;font-size:20px;transform:scaleY(0.935);transform-origin:0 17px;letter-spacing:-0.457px;color:#00599b;">[4:admin-user-1]</div>
<div class="abs" style="left:2.00px;top:1130.60px;width:1598.00px;height:104.00px;background:#f2f4f5"></div>
<div class="abs" style="left:51.40px;top:1130.60px;width:1.60px;height:104.00px;background:#f9fafb"></div>
<svg style="left:21.600px;top:1147.00px" width="9.600" height="13.600" viewBox="0 0 9.600 13.600" fill="none" stroke="#2c3036" stroke-width="2"><path d="M1.200 0.900l6.800 5.900-6.800 5.900"/></svg>
<div class="t" style="left:71.00px;top:1143.00px;font-size:20px;transform:scaleY(0.935);transform-origin:0 17px;letter-spacing:0.332px;color:#00599b;">2/6/23</div>
<div class="t" style="left:71.00px;top:1172.00px;font-size:20px;transform:scaleY(0.935);transform-origin:0 17px;letter-spacing:-0.423px;color:#00599b;">9:51:35.547</div>
<div class="t" style="left:71.00px;top:1201.00px;font-size:20px;transform:scaleY(0.935);transform-origin:0 17px;letter-spacing:-0.750px;color:#00599b;">AM</div>
<div class="t" style="left:213.50px;top:1143.00px;font-size:20px;transform:scaleY(0.935);transform-origin:0 17px;letter-spacing:0.104px;color:#00599b;">docker-desktop</div>
<div class="t" style="left:392.50px;top:1143.00px;font-size:20px;transform:scaleY(0.935);transform-origin:0 17px;letter-spacing:-0.151px;color:#00599b;">"POST /v2/reporting/virtualization-storage-summary-report/search?limit=50&amp;sort=-used_storage HTTP/1.1"200</div>
<div class="t" style="left:1444.70px;top:1143.00px;font-size:20px;transform:scaleY(0.935);transform-origin:0 17px;letter-spacing:-0.457px;color:#00599b;">[4:admin-user-1]</div>
<svg style="left:21.600px;top:1251.00px" width="9.600" height="13.600" viewBox="0 0 9.600 13.600" fill="none" stroke="#2c3036" stroke-width="2"><path d="M1.200 0.900l6.800 5.900-6.800 5.900"/></svg>
<div class="t" style="left:71.00px;top:1247.00px;font-size:20px;transform:scaleY(0.935);transform-origin:0 17px;letter-spacing:0.332px;color:#00599b;">2/6/23</div>
<div class="t" style="left:71.00px;top:1276.00px;font-size:20px;transform:scaleY(0.935);transform-origin:0 17px;letter-spacing:-0.332px;color:#00599b;">9:51:24.846</div>
<div class="t" style="left:71.00px;top:1305.00px;font-size:20px;transform:scaleY(0.935);transform-origin:0 17px;letter-spacing:-0.750px;color:#00599b;">AM</div>
<div class="t" style="left:213.50px;top:1247.00px;font-size:20px;transform:scaleY(0.935);transform-origin:0 17px;letter-spacing:0.104px;color:#00599b;">docker-desktop</div>
<div class="t" style="left:392.50px;top:1247.00px;font-size:20px;transform:scaleY(0.935);transform-origin:0 17px;letter-spacing:-0.332px;color:#00599b;">"POST /v3/access-groups/admin-user-1/policies HTTP/1.1"200</div>
<div class="t" style="left:1444.70px;top:1247.00px;font-size:20px;transform:scaleY(0.935);transform-origin:0 17px;letter-spacing:-1.191px;color:#00599b;">[1:-]</div>
<div id="frame"></div>
</div>
</body>
</html>
